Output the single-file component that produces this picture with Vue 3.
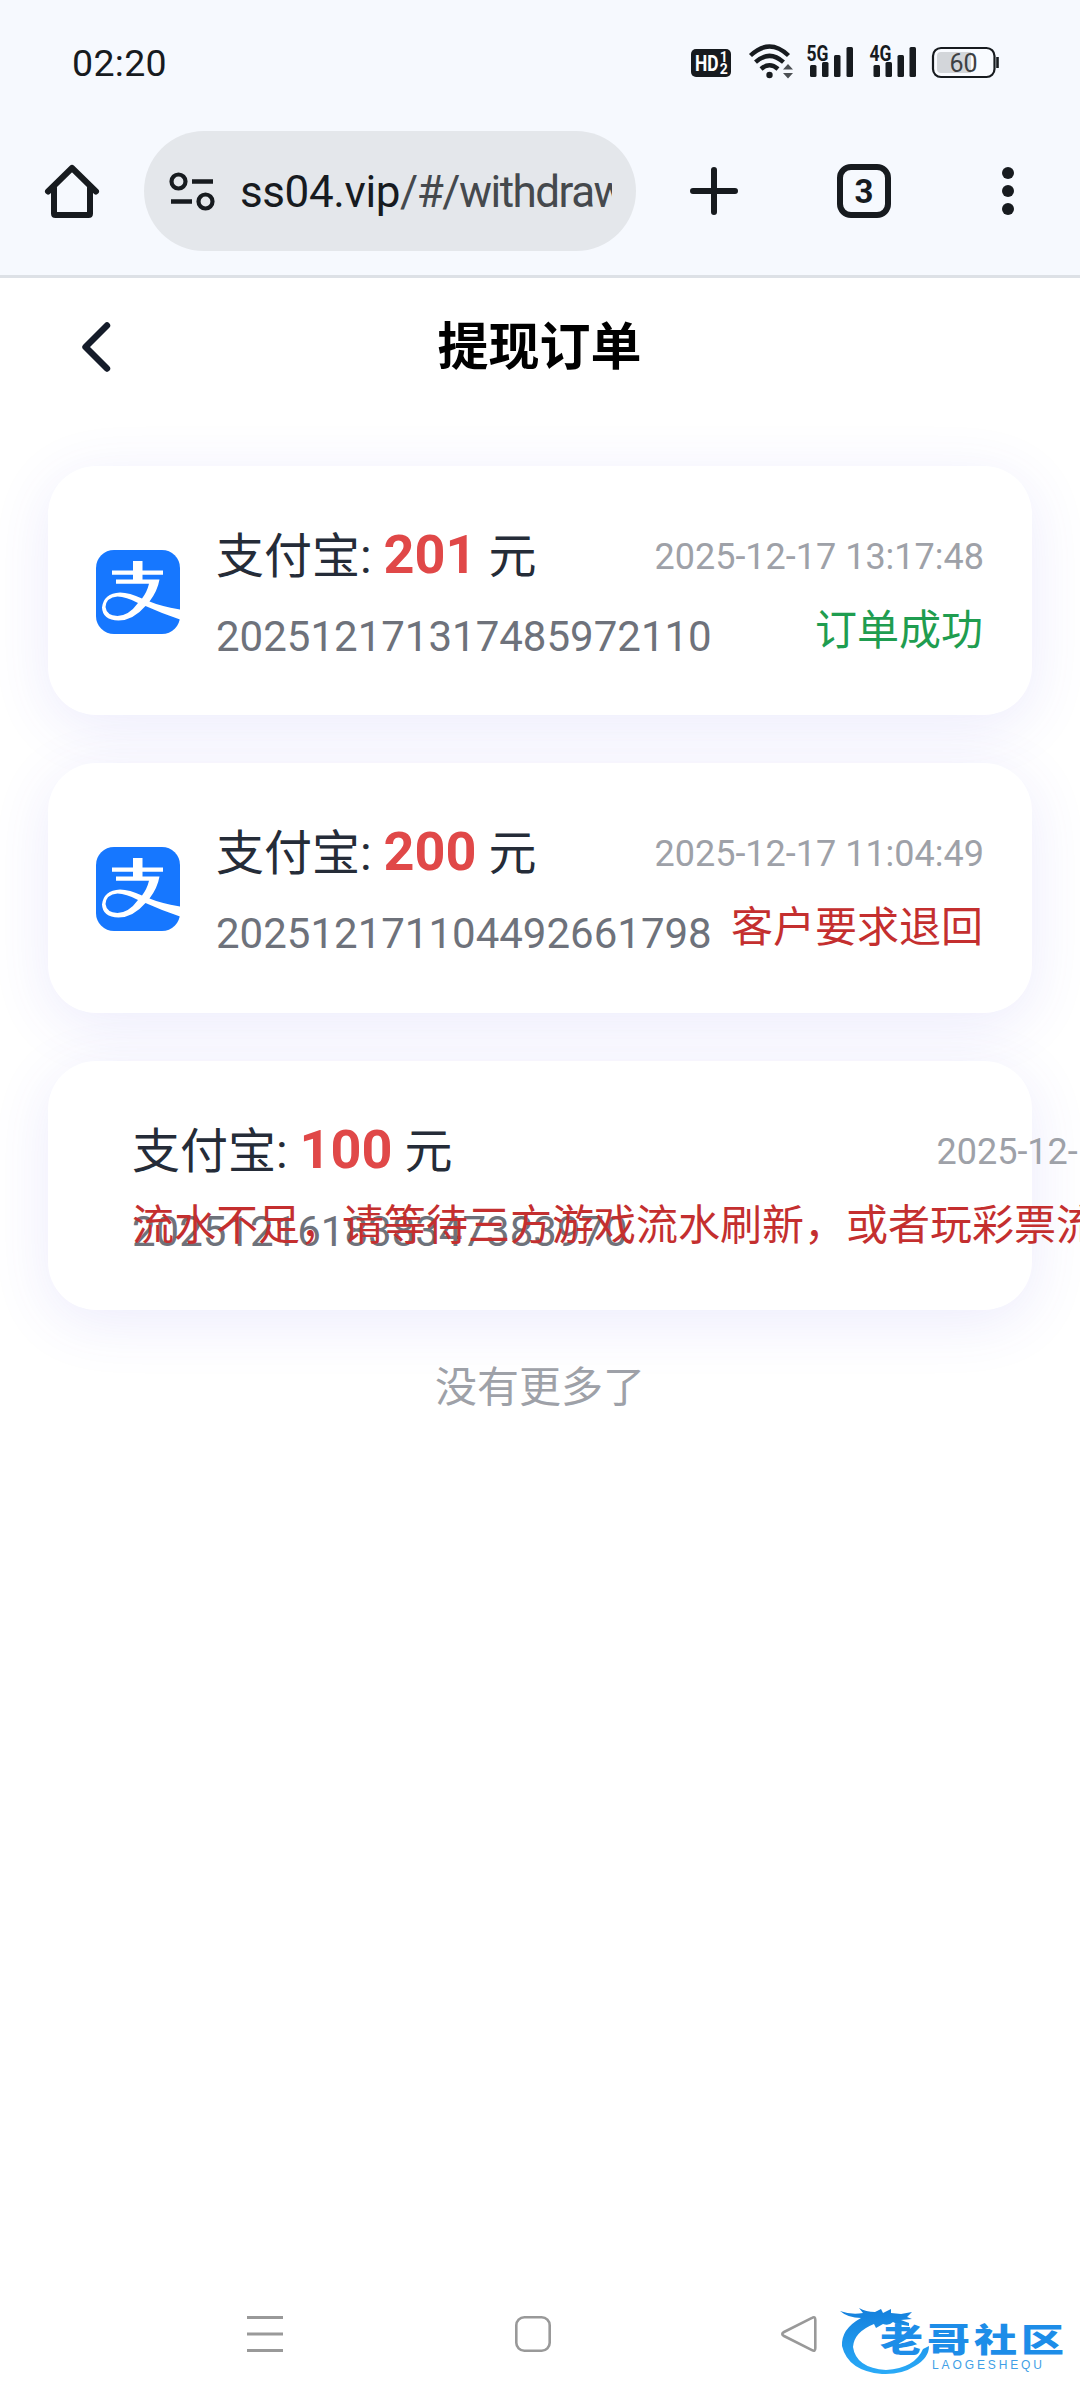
<script setup>
const orders = [
  { id: '202512171317485972110', amount: '201', date: '2025-12-17 13:17:48', status: '订单成功', tone: 'ok' },
  { id: '202512171104492661798', amount: '200', date: '2025-12-17 11:04:49', status: '客户要求退回', tone: 'bad' },
  { id: '202512161838347383970', amount: '100', date: '2025-12-16 18:38:34', status: '流水不足，请等待三方游戏流水刷新，或者玩彩票流水', tone: 'bad', long: true }
]
</script>

<template>
  <div class="screen">
    <header class="chrome">
      <div class="statusbar">
        <span class="clock">02:20</span>
        <svg class="sysicons" width="316" height="44" viewBox="0 0 316 44">
          <g fill="#171b1f">
            <rect x="1" y="9" width="40" height="28" rx="5" />
            <text x="5" y="31" class="hd" textLength="23.500" lengthAdjust="spacingAndGlyphs">HD</text>
            <text x="29.800" y="22" class="hdn">1</text>
            <text x="29.800" y="34" class="hdn">2</text>
          </g>
          <g fill="none" stroke="#171b1f" stroke-width="4.400">
            <path d="M60.500 15.500Q79.500 -2.500 98.500 15.500" />
            <path d="M65.500 22.200Q79.500 9.500 93.500 22.200" />
            <path d="M71 29Q79.500 21.500 88 29" />
          </g>
          <circle cx="79.500" cy="35" r="3.200" fill="#171b1f" />
          <path d="M93 29.500L98 24L103 29.500ZM93 33L98 38.500L103 33Z" fill="#4c5054" />
          <g fill="#171b1f">
            <text x="116.500" y="20.500" class="net" textLength="22" lengthAdjust="spacingAndGlyphs">5G</text>
            <rect x="120" y="25" width="6.500" height="12" rx="1.500" />
            <rect x="132" y="22" width="6.500" height="15" rx="1.500" />
            <rect x="144" y="15" width="6.500" height="22" rx="1.500" />
            <rect x="156.500" y="7" width="6.500" height="30" rx="1.500" />
            <text x="179.500" y="20.500" class="net" textLength="22" lengthAdjust="spacingAndGlyphs">4G</text>
            <rect x="183.500" y="25" width="6.500" height="12" rx="1.500" />
            <rect x="195.500" y="22" width="6.500" height="15" rx="1.500" />
            <rect x="207.500" y="15" width="6.500" height="22" rx="1.500" />
            <rect x="219.500" y="7" width="6.500" height="30" rx="1.500" />
          </g>
          <rect x="243" y="8" width="61.500" height="29" rx="8" fill="#f9fbff" stroke="#171b1f" stroke-width="2.200" />
          <path d="M251 12H281V33H251Q247 33 247 29V16Q247 12 251 12Z" fill="#d3d6da" />
          <path d="M307.500 17V28" stroke="#171b1f" stroke-width="2.600" />
          <text x="259.500" y="31.500" class="bat" textLength="28">60</text>
        </svg>
      </div>
      <div class="toolbar">
        <svg class="home" width="56" height="56" viewBox="0 0 56 56" fill="none" stroke="#171b1f" stroke-width="6" stroke-linecap="round" stroke-linejoin="round">
          <path d="M4 28.500L28 5L52 28.500" />
          <path d="M10 25V50.500Q10 52 11.500 52H44.500Q46 52 46 50.500V25" />
        </svg>
        <div class="omnibox">
          <svg width="46" height="40" viewBox="0 0 46 40" fill="none" stroke="#171b1f">
            <circle cx="9.500" cy="10.500" r="7" stroke-width="4.200" />
            <circle cx="36.500" cy="30.500" r="7" stroke-width="4.200" />
            <path d="M23 10.500H44M2 30.500H23" stroke-width="4.400" />
          </svg>
          <div class="url">ss04.vip<span>/#/withdraw</span></div>
        </div>
        <svg class="plus" width="48" height="48" viewBox="0 0 48 48" stroke="#171b1f" stroke-width="6" stroke-linecap="round">
          <path d="M24 3V45M3 24H45" />
        </svg>
        <div class="tabs">3</div>
        <svg class="dots" width="12" height="48" viewBox="0 0 12 48" fill="#171b1f">
          <circle cx="6" cy="6" r="6" /><circle cx="6" cy="24" r="6" /><circle cx="6" cy="42" r="6" />
        </svg>
      </div>
    </header>

    <div class="titlebar">
      <svg width="32" height="52" viewBox="0 0 32 52" fill="none" stroke="#151c2a" stroke-width="6.400" stroke-linecap="round" stroke-linejoin="round">
        <path d="M27 5.500L5.500 27L27 48.500" />
      </svg>
      <h1>提现订单</h1>
    </div>

    <main class="list">
      <article v-for="o in orders" :key="o.id" class="card">
        <svg v-if="!o.long" class="logo" width="84" height="84" viewBox="0 0 84 84">
          <rect width="84" height="84" rx="18" fill="#1677ff" />
          <path fill="#fff" fill-rule="evenodd" d="M37 11H46.500V20.500H67V24.700H46.500V29.500H63.500Q61.500 41 53.500 51.500Q64 56 84 59.500V69.500Q66 63.500 49.500 56Q37 70.500 22.500 70.500Q6.500 70 6 57.500Q7.500 43.500 24 42.500Q33.500 42.500 46 48.500Q51 42 53 33.700H20V29.500H37V24.700H16V20.500H37ZM42 53Q30 46.500 21.500 46.500Q10 47.500 9.500 57Q10.500 65.500 21.500 66Q33 65.500 42 53Z" />
        </svg>
        <div class="info">
          <div class="pay">支付宝: <b>{{ o.amount }}</b> 元</div>
          <div class="num">{{ o.id }}</div>
        </div>
        <div class="side" :class="{ long: o.long }">
          <div class="date">{{ o.date }}</div>
          <div class="state" :class="o.tone">{{ o.status }}</div>
        </div>
      </article>
      <p class="end">没有更多了</p>
    </main>

    <footer class="nav">
      <svg class="n1" width="36" height="38" viewBox="0 0 36 38" stroke="#999" stroke-width="3"><path d="M0 2.500H36M0 19H36M0 35.500H36" /></svg>
      <svg class="n2" width="38" height="38" viewBox="0 0 38 38" fill="none" stroke="#999" stroke-width="2.600"><rect x="2.300" y="2.300" width="33.400" height="33.400" rx="8" /></svg>
      <svg class="n3" width="38" height="38" viewBox="0 0 38 38" fill="none" stroke="#999" stroke-width="2.600" stroke-linejoin="round"><path d="M32 2.800Q35.300 1 35.300 5V33Q35.300 37 32 35.200L4 21Q0.500 19 4 17Z" /></svg>
      <svg class="brand" width="240" height="80" viewBox="0 0 240 80">
        <defs>
          <linearGradient id="ring" x1="0" y1="0" x2="0" y2="1"><stop offset="0" stop-color="#147fdc" /><stop offset="1" stop-color="#2aabf8" /></linearGradient>
        </defs>
        <path fill="url(#ring)" d="M1 8Q12 12 24 10L20 5Q27 9 36 9L42 6L44 10L52 6L52 10L62 11L73 9L68 14L73 16L62 17L70 20L70 23L58 21L54 19Q50 23 44 21L37 25L35 21Q15 29 14 44Q17 65 47 67Q76 65 84 46L90 43Q90 55 76 63Q62 72 43 71Q9 68 3 43Q2 26 22 15Q9 15 1 8Z" />
        <g transform="translate(41 49) scale(1 .76)"><text class="brandname" textLength="184" fill="#1d8de8">老哥社区</text></g>
        <text x="93" y="66" class="brandsub" textLength="110">LAOGESHEQU</text>
      </svg>
    </footer>
  </div>
</template>

<style>
body { margin: 0; background: #fff; }
</style>

<style scoped>
.screen { width: 1080px; height: 2400px; overflow: hidden; display: flex; flex-direction: column; background: #fff; font-family: Roboto, "Noto Sans CJK SC", sans-serif; }
.chrome { height: 275px; flex: none; background: #f6f9fe; border-bottom: 3px solid #dde1e6; }
.statusbar { height: 124px; padding: 0 74px 0 72px; display: flex; justify-content: space-between; align-items: center; box-sizing: border-box; color: #171b1f; }
.clock { font-size: 37.500px; line-height: 44px; letter-spacing: .3px; padding-top: 2px; }
.sysicons { flex: none; }
.hd { font-size: 22px; font-weight: 700; fill: #fff; }
.hdn { font-size: 14px; font-weight: 700; fill: #fff; }
.net { font-size: 22.500px; font-weight: 700; }
.bat { font-size: 25px; fill: #3d4043; }
.toolbar { height: 134px; display: flex; align-items: center; }
.home { margin-left: 44px; }
.omnibox { margin-left: 44px; width: 492px; height: 120px; border-radius: 60px; background: #e4e7eb; display: flex; align-items: center; padding: 0 24px 0 25px; box-sizing: border-box; }
.omnibox svg { flex: none; }
.url { margin-left: 25px; padding-top: 2px; flex: 1; overflow: hidden; white-space: nowrap; font-size: 44px; line-height: 60px; letter-spacing: -.4px; color: #171b1f; }
.url span { color: #45494d; letter-spacing: -1.500px; }
.plus { margin-left: 54px; }
.tabs { margin-left: 99px; width: 54px; height: 54px; box-sizing: border-box; border: 6px solid #171b1f; border-radius: 14px; font-size: 33px; line-height: 43px; font-weight: 700; text-align: center; color: #171b1f; }
.dots { margin-left: 111px; }
.titlebar { flex: none; height: 188px; display: flex; align-items: flex-start; padding: 42px 80px 0; box-sizing: border-box; }
.titlebar h1 { flex: 1; margin: 2px 33px 0 0; text-align: center; font-size: 51px; line-height: 52px; font-weight: 700; color: #000; }
.list { flex: 1; display: flex; flex-direction: column; gap: 48px; padding: 0 48px; }
.card { flex: none; height: 249.400px; box-sizing: border-box; padding: 0 48px; border-radius: 48px; background: #fff; box-shadow: 0 12px 60px rgba(80, 70, 229, .11); display: flex; align-items: flex-start; white-space: nowrap; }
.logo { flex: none; margin-top: 84px; }
.info { width: 0; margin-left: 36px; padding-top: 53px; }
.pay { font-size: 48px; line-height: 72px; height: 72px; color: #252c38; }
.pay b { font-size: 54px; line-height: 72px; font-weight: 700; color: #e04848; }
.num { margin-top: 16px; font-size: 42px; line-height: 60px; color: #6e727b; }
.side { margin-left: auto; padding-top: 67px; display: flex; flex-direction: column; align-items: flex-end; flex: none; }
.side.long { width: 1134px; margin-left: 0; }
.date { font-size: 36px; line-height: 48px; color: #9ea1a8; }
.state { margin-top: 19px; margin-right: 1px; font-size: 42px; line-height: 62px; }
.long .state { align-self: flex-start; }
.ok { color: #1f9d50; }
.bad { color: #c42f2f; }
.end { margin: 0; text-align: center; font-size: 42px; line-height: 60px; color: #9ea1a8; }
.nav { flex: none; height: 110px; display: flex; align-items: flex-start; padding-left: 247px; }
.nav svg { flex: none; }
.n1, .n2, .n3 { margin-top: 25px; }
.n2 { margin-left: 231px; }
.n3 { margin-left: 228px; }
.brand { margin: 13px 0 0 21px; }
.brandname { font: 900 43px "Noto Sans CJK SC", sans-serif; }
.brandsub { font: 400 12px "Liberation Sans", sans-serif; fill: #3f9fe6; }
</style>
